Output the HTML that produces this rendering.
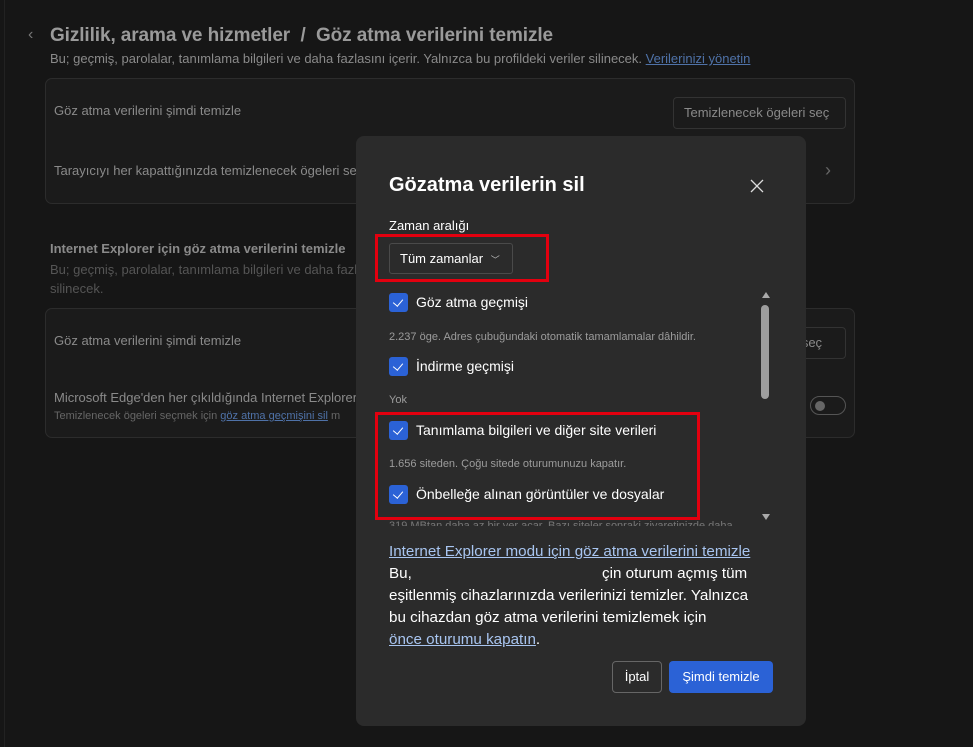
<!DOCTYPE html>
<html><head><meta charset="utf-8"><style>
*{margin:0;padding:0;box-sizing:border-box}
body{width:973px;height:747px;background:#161616;font-family:"Liberation Sans",sans-serif;position:relative;overflow:hidden;color:#8a8a8a}
.a{position:absolute;white-space:nowrap}
.card{position:absolute;background:#1b1b1b;border:1px solid #2c2c2c;border-radius:7px}
.btn{position:absolute;border:1px solid #333;border-radius:4px;color:#8a8a8a;font-size:13px;padding:0 10px;line-height:30px}
.dlg{position:absolute;left:356px;top:136px;width:450px;height:590px;background:#2b2b2b;border-radius:8px;color:#fff}
.cb{position:absolute;left:33px;width:19px;height:19px;background:#2b62d6;border-radius:3px}
.cb:after{content:"";position:absolute;left:6px;top:4px;width:5px;height:8px;border:solid #fff;border-width:0 1.6px 1.6px 0;transform:rotate(40deg)}
.lbl{position:absolute;left:60px;font-size:14px;color:#fff}
.sm{position:absolute;left:33px;font-size:11px;color:#9c9c9c}
.red{position:absolute;border:3px solid #e3000f}
a{color:#a8c5f0;text-decoration:underline}
</style></head><body>
<div class="a" style="left:4px;top:0;width:1px;height:747px;background:#222"></div>
<div class="a" style="left:28px;top:26px;font-size:16px;color:#777">‹</div>
<div class="a" style="left:50px;top:25px;font-size:19px;font-weight:bold;color:#9a9a9a;letter-spacing:-0.1px">Gizlilik, arama ve hizmetler &nbsp;/&nbsp; Göz atma verilerini temizle</div>
<div class="a" style="left:50px;top:51px;font-size:13px;color:#8a8a8a">Bu; geçmiş, parolalar, tanımlama bilgileri ve daha fazlasını içerir. Yalnızca bu profildeki veriler silinecek. <span style="color:#4f72a8;text-decoration:underline">Verilerinizi yönetin</span></div>
<div class="card" style="left:45px;top:78px;width:810px;height:126px"></div>
<div class="a" style="left:54px;top:103px;font-size:13px">Göz atma verilerini şimdi temizle</div>
<div class="btn" style="left:673px;top:97px;height:32px;width:173px">Temizlenecek ögeleri seç</div>
<div class="a" style="left:54px;top:163px;font-size:13px">Tarayıcıyı her kapattığınızda temizlenecek ögeleri seç</div>
<div class="a" style="left:825px;top:160px;font-size:18px;color:#666">›</div>
<div class="a" style="left:50px;top:241px;font-size:13px;font-weight:bold;color:#8a8a8a">Internet Explorer için göz atma verilerini temizle</div>
<div class="a" style="left:50px;top:262px;font-size:13px;color:#555">Bu; geçmiş, parolalar, tanımlama bilgileri ve daha fazlası</div>
<div class="a" style="left:50px;top:281px;font-size:13px;color:#555">silinecek.</div>
<div class="card" style="left:45px;top:308px;width:810px;height:130px"></div>
<div class="a" style="left:54px;top:333px;font-size:13px">Göz atma verilerini şimdi temizle</div>
<div class="btn" style="left:780px;top:327px;height:32px;width:66px">ri seç</div>
<div class="a" style="left:54px;top:390px;font-size:13px">Microsoft Edge'den her çıkıldığında Internet Explorer</div>
<div class="a" style="left:54px;top:410px;font-size:11px;color:#666">Temizlenecek ögeleri seçmek için <span style="color:#4f72a8;text-decoration:underline">göz atma geçmişini sil</span> m</div>
<div class="a" style="left:810px;top:396px;width:36px;height:19px;border:1px solid #555;border-radius:10px"><div style="position:absolute;left:4px;top:4px;width:10px;height:10px;border-radius:50%;background:#666"></div></div>

<div class="dlg">
<div class="a" style="left:33px;top:38px;font-size:20px;font-weight:bold">Gözatma verilerin sil</div>
<svg class="a" style="left:394px;top:43px" width="14" height="14"><path d="M1 1L13 13M13 1L1 13" stroke="#ddd" stroke-width="1.3"/></svg>
<div class="a" style="left:33px;top:82px;font-size:13px">Zaman aralığı</div>
<div class="a" style="left:33px;top:107px;width:124px;height:31px;border:1px solid #4a4a4a;border-radius:3px;font-size:13px;line-height:29px;padding-left:10px">Tüm zamanlar <span style="font-size:9px;color:#bbb;margin-left:4px">﹀</span></div>
<div class="red" style="left:19px;top:98px;width:174px;height:48px"></div>
<div class="cb" style="top:157px"></div><div class="lbl" style="top:158px">Göz atma geçmişi</div>
<div class="sm" style="top:195px">2.237 öge. Adres çubuğundaki otomatik tamamlamalar dâhildir.</div>
<div class="cb" style="top:221px"></div><div class="lbl" style="top:222px">İndirme geçmişi</div>
<div class="sm" style="top:258px">Yok</div>
<div class="cb" style="top:285px"></div><div class="lbl" style="top:286px">Tanımlama bilgileri ve diğer site verileri</div>
<div class="sm" style="top:322px">1.656 siteden. Çoğu sitede oturumunuzu kapatır.</div>
<div class="cb" style="top:349px"></div><div class="lbl" style="top:350px">Önbelleğe alınan görüntüler ve dosyalar</div>
<div class="red" style="left:19px;top:276px;width:325px;height:108px"></div>
<div class="sm" style="top:384px;height:6px;overflow:hidden;color:#777">319 MBtan daha az bir yer açar. Bazı siteler sonraki ziyaretinizde daha</div>
<div class="a" style="left:406px;top:156px;border:4px solid transparent;border-bottom:6px solid #aaa;border-top:0"></div>
<div class="a" style="left:405px;top:169px;width:8px;height:94px;background:#9e9e9e;border-radius:4px"></div>
<div class="a" style="left:406px;top:378px;border:4px solid transparent;border-top:6px solid #aaa;border-bottom:0"></div>
<div class="a" style="left:33px;top:405px;font-size:15.2px;line-height:22px"><a>Internet Explorer modu için göz atma verilerini temizle</a><br>Bu, <span style="display:inline-block;width:186px"></span>çin oturum açmış tüm<br>eşitlenmiş cihazlarınızda verilerinizi temizler. Yalnızca<br>bu cihazdan göz atma verilerini temizlemek için<br><a>önce oturumu kapatın</a>.</div>
<div class="a" style="left:256px;top:525px;width:50px;height:32px;border:1px solid #666;border-radius:4px;font-size:13px;line-height:30px;text-align:center">İptal</div>
<div class="a" style="left:313px;top:525px;width:104px;height:32px;background:#2b62d6;border-radius:4px;font-size:13px;line-height:32px;text-align:center">Şimdi temizle</div>
</div>
</body></html>
